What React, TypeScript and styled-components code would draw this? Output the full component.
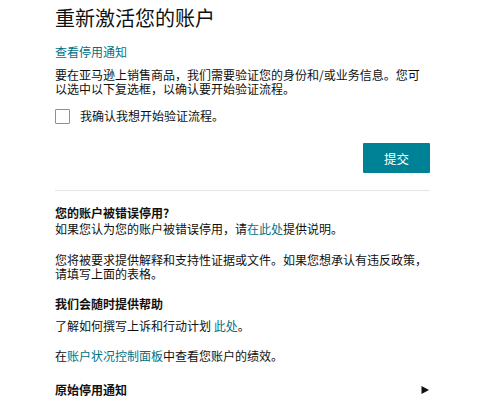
import styled, { createGlobalStyle } from "styled-components";

const GlobalStyle = createGlobalStyle`
	html, body {
		margin: 0;
		padding: 0;
		background: #ffffff;
	}
	body {
		font-family: "Noto Sans CJK SC", "Noto Sans", sans-serif;
		color: #0f1111;
	}
`;

function App() {
	return (
		<>
			<GlobalStyle />
			<Page>
				<Title>重新激活您的账户</Title>
				<NoticeLink href="#">查看停用通知</NoticeLink>
				<Text>
					要在亚马逊上销售商品，我们需要验证您的身份和/或业务信息。您可以选中以下复选框，以确认要开始验证流程。
				</Text>
				<CheckRow>
					<CheckBox type="checkbox" />
					<span>我确认我想开始验证流程。</span>
				</CheckRow>
				<Actions>
					<SubmitButton>提交</SubmitButton>
				</Actions>
				<Divider />
				<Heading $top={14}>您的账户被错误停用?</Heading>
				<Text $top={2}>
					如果您认为您的账户被错误停用，请<A href="#">在此处</A>提供说明。
				</Text>
				<Text $top={17}>
					您将被要求提供解释和支持性证据或文件。如果您想承认有违反政策，请填写上面的表格。
				</Text>
				<Heading $top={15}>我们会随时提供帮助</Heading>
				<Text $top={8}>
					了解如何撰写上诉和行动计划 <A href="#">此处</A>。
				</Text>
				<Text $top={16}>
					在<A href="#">账户状况控制面板</A>中查看您账户的绩效。
				</Text>
				<Expander>
					<Heading $top={0}>原始停用通知</Heading>
					<Caret viewBox="0 0 8 8" aria-hidden="true">
						<path d="M0.5 0 L8 4 L0.5 8 Z" fill="#0f1111" />
					</Caret>
				</Expander>
			</Page>
		</>
	);
}

const Page = styled.div`
	box-sizing: border-box;
	width: 375px;
	margin-left: 55px;
	padding-top: 4px;
	display: flex;
	flex-direction: column;
	font-size: 12px;
	line-height: 14px;
`;

const Title = styled.h1`
	margin: 0;
	font-size: 20px;
	line-height: 28px;
	font-weight: 400;
	color: #0f1111;
`;

const NoticeLink = styled.a`
	margin-top: 13px;
	align-self: flex-start;
	color: #007185;
	text-decoration: none;
`;

const Text = styled.p<{ $top?: number }>`
	margin: ${props => props.$top ?? 9}px 0 0;
	color: #0f1111;
`;

const A = styled.a`
	color: #007185;
	text-decoration: none;
`;

const CheckRow = styled.label`
	margin-top: 12px;
	display: flex;
	align-items: center;
	gap: 10px;
	height: 16px;
`;

const CheckBox = styled.input`
	appearance: none;
	margin: 0;
	width: 15px;
	height: 15px;
	border: 1px solid #8d9096;
	border-radius: 1px;
	background: #fff;
	box-sizing: border-box;
`;

const Actions = styled.div`
	margin-top: 19px;
	display: flex;
	justify-content: flex-end;
`;

const SubmitButton = styled.button`
	width: 67px;
	height: 30px;
	border: none;
	border-radius: 1px;
	background: #008296;
	color: #ffffff;
	font-family: inherit;
	font-size: 12.5px;
	cursor: pointer;
`;

const Divider = styled.hr`
	margin: 17px 0 0;
	border: none;
	border-top: 1px solid #e3e6e6;
`;

const Heading = styled.h3<{ $top: number }>`
	margin: ${props => props.$top}px 0 0;
	font-size: 12px;
	line-height: 15px;
	font-weight: 700;
	color: #0f1111;
`;

const Expander = styled.div`
	margin-top: 19px;
	display: flex;
	justify-content: space-between;
	align-items: center;
	cursor: pointer;
`;

const Caret = styled.svg`
	width: 8px;
	height: 8px;
	margin-right: 1px;
`;

export default App;
